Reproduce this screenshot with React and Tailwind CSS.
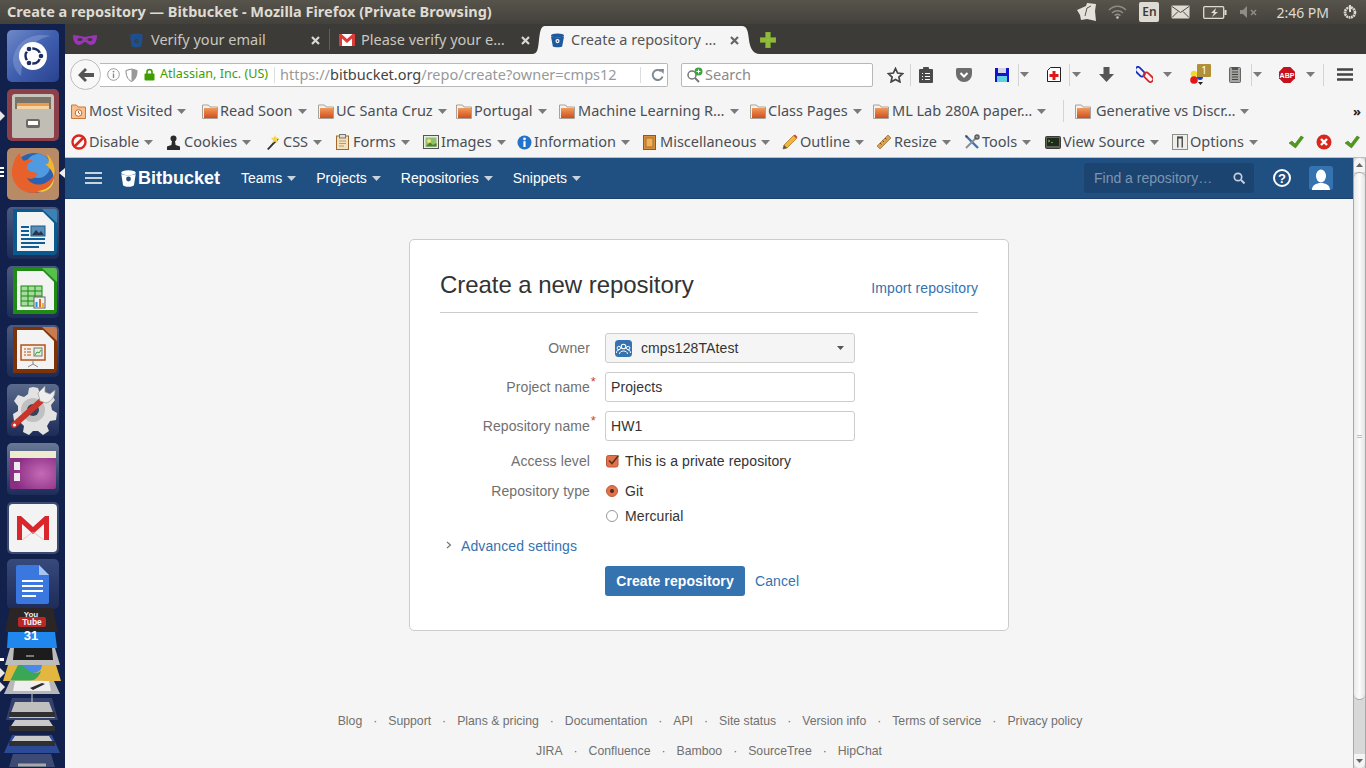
import React from "react";

const Caret = ({ c = "#7a7a7a", w = 9, h = 5 }) => (
  <svg width={w} height={h} viewBox="0 0 9 5" className="shrink-0"><path d="M0 0h9L4.5 5z" fill={c} /></svg>
);
const Close = ({ c = "#d8d8d4" }) => (
  <svg width="9" height="9" viewBox="0 0 9 9" className="shrink-0"><path d="M1 1l7 7M8 1L1 8" stroke={c} strokeWidth="2.2" /></svg>
);
const BucketIcon = ({ c = "#205081", hole = "#fff", s = 16 }) => (
  <svg width={s} height={s} viewBox="0 0 16 16" className="shrink-0">
    <ellipse cx="8" cy="2.6" rx="7" ry="2.2" fill={c} />
    <path d="M1 3.4c2 1.6 12 1.6 14 0L13 14c-.3 1.6-9.7 1.6-10 0z" fill={c} />
    <circle cx="8" cy="8.6" r="2.2" fill={hole} />
    <circle cx="8" cy="8.6" r="1" fill={c} />
  </svg>
);
const GmailIcon = ({ w = 16, h = 12 }) => (
  <svg width={w} height={h} viewBox="0 0 16 12" className="shrink-0">
    <rect width="16" height="12" fill="#fff" />
    <path d="M0 0h2.5L8 5l5.5-5H16v12h-3V4.6L8 9 3 4.6V12H0z" fill="#dc3b37" />
  </svg>
);
const Folder = () => (
  <svg width="16" height="15" viewBox="0 0 16 15" className="shrink-0">
    <path d="M.5 1h6l1.5 2h7.5v11.500H.5z" fill="#f4f2ee" stroke="#a8a29a" />
    <rect x="2" y="4" width="13" height="10" fill="url(#fold)" />
    <defs><linearGradient id="fold" x1="0" y1="0" x2="0" y2="1"><stop offset="0" stopColor="#ef9a5b" /><stop offset="1" stopColor="#d2501d" /></linearGradient></defs>
  </svg>
);
const MostVisited = () => (
  <svg width="15" height="15" viewBox="0 0 15 15" className="shrink-0">
    <path d="M.5 1h5l1.500 2h7.500v11.500H.5z" fill="#f6c18e" stroke="#c9773a" />
    <circle cx="7.500" cy="9" r="3.300" fill="#fff" stroke="#c9622a" />
    <path d="M7.500 7v2l1.600 1" stroke="#c9622a" fill="none" />
  </svg>
);
const Ic = {
  disable: <svg width="16" height="16" viewBox="0 0 16 16"><circle cx="8" cy="8" r="6.500" fill="#fff" stroke="#d9281e" strokeWidth="2.400" /><path d="M3.500 12.500l9-9" stroke="#d9281e" strokeWidth="2.600" /></svg>,
  cookies: <svg width="15" height="15" viewBox="0 0 15 15"><circle cx="7.500" cy="3.500" r="3" fill="#2b2b2b" /><path d="M6 6h3l.6 4 4.400 1.500V15H1v-3.500L5.400 10z" fill="#2b2b2b" /></svg>,
  css: <svg width="16" height="16" viewBox="0 0 16 16"><path d="M2 15L12 4l1.500 1.500L3.500 16z" fill="#333" /><path d="M10 1l1 2.500L14 4l-2 2 .5 3L10 7.500 7.500 9 8 6 6 4l3-.5z" fill="#f2d649" /></svg>,
  forms: <svg width="15" height="16" viewBox="0 0 15 16"><rect x="1.500" y="2" width="12" height="13.500" fill="#f3e2bd" stroke="#9b6a2c" /><rect x="4.500" y=".5" width="6" height="3.500" fill="#ddd" stroke="#777" /><path d="M4 7h7M4 9.500h7M4 12h5" stroke="#bb9a66" /></svg>,
  images: <svg width="16" height="14" viewBox="0 0 16 14"><rect x=".5" y=".5" width="15" height="13" fill="#e8ece4" stroke="#555" /><rect x="2.500" y="2.500" width="11" height="9" fill="#8fc06a" /><circle cx="6" cy="6" r="2" fill="#f4e27a" /><path d="M2.500 11.500L7 7.500l3 2.500 3.500-2v3.500z" fill="#4f7f33" /></svg>,
  info: <svg width="15" height="15" viewBox="0 0 15 15"><circle cx="7.500" cy="7.500" r="7" fill="#2273c9" /><rect x="6.400" y="6.200" width="2.200" height="5.800" fill="#fff" /><circle cx="7.500" cy="3.900" r="1.300" fill="#fff" /></svg>,
  misc: <svg width="13" height="15" viewBox="0 0 13 15"><rect x=".5" y=".5" width="12" height="14" fill="#d98f3a" stroke="#8b5a1e" /><rect x="3" y="3" width="7" height="9" fill="#eeb25e" stroke="#a96e2a" /></svg>,
  outline: <svg width="16" height="16" viewBox="0 0 16 16"><path d="M1 15l1-4L11.500 1.500l3 3L5 14z" fill="#f1b53c" stroke="#a76f17" strokeWidth=".7" /><path d="M11.500 1.500l3 3 1-1.500-2.500-2.500z" fill="#d8443a" /><path d="M1 15l1-4 3 3z" fill="#555" /></svg>,
  resize: <svg width="16" height="16" viewBox="0 0 16 16"><path d="M1 12L12 1l3 3L4 15z" fill="#d9a058" stroke="#9a6a2b" strokeWidth=".7" /><path d="M4 9l1.500 1.500M6.500 6.500L8 8M9 4l1.500 1.500" stroke="#7b4f18" /></svg>,
  tools: <svg width="16" height="16" viewBox="0 0 16 16"><path d="M2 2l12 12" stroke="#3a76b8" strokeWidth="2.400" /><path d="M14 2L2 14" stroke="#8a8f96" strokeWidth="2" /><circle cx="13" cy="3" r="2" fill="none" stroke="#555" strokeWidth="1.400" /><path d="M1 1l3 1-2 2z" fill="#444" /></svg>,
  source: <svg width="16" height="13" viewBox="0 0 16 13"><rect x=".5" y=".5" width="15" height="12" rx="1" fill="#5e635a" stroke="#3a3a3a" /><rect x="2" y="2" width="12" height="8" fill="#1f2a1c" /><path d="M3 4l2 1-2 1M6 6.500h2" stroke="#7bd36a" strokeWidth=".7" fill="none" /></svg>,
  options: <svg width="16" height="16" viewBox="0 0 16 16"><rect x=".5" y=".5" width="15" height="15" fill="#eeeeea" stroke="#8e8e88" /><rect x="5" y="2.500" width="1.500" height="11" fill="#555" /><rect x="9.500" y="2.500" width="1.500" height="11" fill="#555" /><rect x="5.500" y="2.500" width="5" height="2" fill="#444" /></svg>,
};
const Check = () => (
  <svg width="16" height="14" viewBox="0 0 16 14"><path d="M1 8l3-2 3 3 6-8 2.500 1.500L7.500 13z" fill="#4f9a1c" stroke="#3a7a10" strokeWidth=".6" /></svg>
);
const Bm = ({ w, icon, label, tx }) => (
  <div className={`${w} flex items-center shrink-0`}>
    <span className={`${tx} flex items-center justify-start shrink-0`}>{icon}</span>
    <span className="whitespace-nowrap">{label}</span>
    <span className="ml-[5px]"><Caret /></span>
  </div>
);
const Sep = ({ cls = "" }) => <div className={`w-px h-[22px] bg-[#d4d4d4] shrink-0 ${cls}`} />;

const Tile = ({ bg, children }) => (
  <div className={`w-[52px] h-[52px] rounded-[5px] overflow-hidden shrink-0 ${bg}`}>
    <svg width="52" height="52" viewBox="0 0 52 52">{children}</svg>
  </div>
);

const DocSheet = ({ c, c2 }) => (
  <>
    <path d="M6 2h32l12 12v30a4 4 0 0 1-4 4H6z" fill={c} />
    <path d="M10 5h26l11 11v28H10z" fill="#f3f3f3" />
    <path d="M35 2l15 14V5a3 3 0 0 0-3-3z" fill={c2} />
  </>
);

function Launcher() {
  return (
    <aside className="relative w-[65px] shrink-0 bg-[#11214c] flex flex-col items-center pt-[6px] gap-[7px] h-[744px] overflow-hidden">
      <Tile bg="bg-gradient-to-br from-[#6f88c8] via-[#3f5fae] to-[#2a4290]">
        <path d="M6 30C8 12 24 2 44 6 30 8 16 18 14 46 9 42 6 36 6 30z" fill="#8fa5d8" opacity=".45" />
        <circle cx="26" cy="26" r="14" fill="#fff" />
        <circle cx="26" cy="26" r="7.500" fill="none" stroke="#1c2e63" strokeWidth="2.400" />
        <circle cx="34" cy="26" r="3.400" fill="#fff" />
        <circle cx="22" cy="19" r="3.400" fill="#fff" />
        <circle cx="22" cy="33" r="3.400" fill="#fff" />
        <circle cx="34" cy="26" r="2.300" fill="#1c2e63" />
        <circle cx="22" cy="19" r="2.300" fill="#1c2e63" />
        <circle cx="22" cy="33" r="2.300" fill="#1c2e63" />
      </Tile>
      <Tile bg="bg-[#8c4049]">
        <rect x="5" y="5" width="42" height="44" rx="3" fill="#c7c4bb" />
        <rect x="8" y="8" width="36" height="14" fill="#7a7468" />
        <rect x="10" y="14" width="32" height="6" fill="#ed9a4f" />
        <rect x="10" y="17" width="32" height="4" fill="#f5d3a2" />
        <rect x="5" y="20" width="42" height="29" rx="2" fill="#c0bdb4" />
        <rect x="19" y="30" width="14" height="9" rx="2" fill="#6d6a62" />
        <rect x="21" y="32" width="10" height="4" fill="#fff" />
      </Tile>
      <Tile bg="bg-[#b98a66]">
        <circle cx="27" cy="25" r="20" fill="#2a62b0" />
        <circle cx="31" cy="18" r="12" fill="#4f9ae0" />
        <path d="M5 22C6 14 9 8 13 5c0 4 2 6 4 8 3-2 7-2 9 0-3 1-6 3-6 6 0 5 6 5 10 6 0 5-6 7-10 5 3 6 12 9 20 4 5-3 8-8 9-13 0 13-10 24-23 24C13 45 4 34 5 22z" fill="#e8602a" />
        <path d="M40 6c6 6 9 14 7 24-1-7-5-11-9-14 4 1 5-2 2-10z" fill="#f6b32c" />
        <path d="M47 30c-2 8-9 13-17 13 9 3 17-4 17-13z" fill="#f8d23a" />
      </Tile>
      <Tile bg="bg-gradient-to-b from-[#4a5a80] to-[#1d2c58]">
        <DocSheet c="#0b5a8f" c2="#3c82b4" />
        <path d="M14 20h8M14 24h8M14 28h8M14 32h24M14 36h24M14 40h18" stroke="#0e5f95" strokeWidth="2" />
        <rect x="24" y="19" width="14" height="10" fill="#5c8db5" stroke="#0e5f95" />
        <path d="M25 28l4-5 3 3 2-2 3 4z" fill="#26384f" />
      </Tile>
      <Tile bg="bg-gradient-to-b from-[#4a5a80] to-[#1d2c58]">
        <DocSheet c="#1f8a14" c2="#56c04a" />
        <rect x="14" y="20" width="21" height="20" fill="#a7dca0" stroke="#168a0c" />
        <path d="M14 25h21M14 30h21M14 35h21M21 20v20M28 20v20" stroke="#168a0c" />
        <rect x="27" y="31" width="11" height="11" fill="#eee" stroke="#666" />
        <rect x="28.500" y="36" width="2" height="5" fill="#2a8fd8" />
        <rect x="32" y="33" width="2" height="8" fill="#e06a2a" />
        <rect x="35" y="37" width="2" height="4" fill="#eeb030" />
      </Tile>
      <Tile bg="bg-gradient-to-b from-[#4a5a80] to-[#1d2c58]">
        <DocSheet c="#7d3208" c2="#c87a50" />
        <rect x="14" y="20" width="24" height="15" fill="#f6eee6" stroke="#b3531d" strokeWidth="1.500" />
        <path d="M17 24h2M17 27h2M17 30h2M20 24h4M20 27h4M20 30h4" stroke="#b3531d" />
        <rect x="27" y="23" width="8" height="8" fill="#dff0d8" stroke="#777" />
        <path d="M28 30l2-3 2 1 2-3" stroke="#3d9a3a" fill="none" />
        <path d="M26 35v4M26 39l-5 3M26 39l5 3" stroke="#888" />
      </Tile>
      <Tile bg="bg-gradient-to-b from-[#5a6a8c] to-[#1d2c58]">
        <path d="M26 3l5 1 2 6 5 2 6-2 4 6-4 5 1 5 5 3-1 7-6 1-3 5 2 5-6 4-5-4h-5l-4 4-6-3 1-6-4-4-6-1-1-7 5-3v-5l-4-5 4-6 6 2 4-3 1-6z" fill="#e2e2e2" />
        <circle cx="26" cy="26" r="12" fill="#c0c0c0" />
        <circle cx="26" cy="26" r="6" fill="#35405c" />
        <path d="M7 41L34 17" stroke="#c8352b" strokeWidth="6" strokeLinecap="round" />
        <path d="M33 17l-2-8 7-7v6l5 2 5-4c0 8-5 12-9 13z" fill="#eeeeee" stroke="#999" strokeWidth=".7" />
        <circle cx="7.500" cy="41" r="1.500" fill="#fff" />
      </Tile>
      <Tile bg="bg-gradient-to-b from-[#6a7896] to-[#1d2c58]">
        <defs><radialGradient id="wsp" cx=".68" cy=".6" r=".6"><stop offset="0" stopColor="#c46bb6" /><stop offset="1" stopColor="#8a2e84" /></radialGradient></defs>
        <rect x="3" y="8" width="46" height="38" rx="2" fill="url(#wsp)" />
        <rect x="3" y="8" width="46" height="7" fill="#ecebcf" />
        <rect x="7" y="19" width="6" height="8" fill="#ececec" />
        <rect x="7" y="30" width="6" height="8" fill="#ececec" />
      </Tile>
      <Tile bg="bg-[#3a4a70]">
        <rect x="2" y="2" width="48" height="48" rx="4" fill="#f3f3f3" />
        <path d="M10 14h4l12 11 12-11h4v24h-5V22L26 32 15 22v16h-5z" fill="#d8262c" />
        <path d="M15 38l11-8 11 8" stroke="#e8b0b0" fill="none" strokeWidth=".7" />
      </Tile>
      <div className="w-[52px] h-[50px] -mt-[2px] rounded-[5px] bg-gradient-to-b from-[#37497c] to-[#1d2c58] flex items-center justify-center shrink-0">
        <svg width="33" height="39" viewBox="0 0 33 39">
          <path d="M2 0h21l10 10v27a2 2 0 0 1-2 2H2a2 2 0 0 1-2-2V2a2 2 0 0 1 2-2z" fill="#3a78e0" />
          <path d="M23 0l10 10H23z" fill="#a8c5f2" />
          <path d="M6 16h21M6 21h21M6 26h21M6 31h14" stroke="#fff" strokeWidth="2.200" />
        </svg>
      </div>
      <svg width="65" height="160" viewBox="0 0 65 160" className="shrink-0 -mt-[9px]">
        <path d="M10 1h43l5 24H5z" fill="#2b2526" />
        <text x="31" y="9.500" textAnchor="middle" fill="#eee" fontSize="8" fontWeight="700" fontFamily="Liberation Sans">You</text>
        <rect x="18" y="10" width="28" height="10" rx="2" fill="#bb2626" />
        <text x="32" y="18" textAnchor="middle" fill="#f4f4f4" fontSize="8.500" fontWeight="700" fontFamily="Liberation Sans">Tube</text>
        <path d="M8 25h47l2 16H7z" fill="#1f87ee" />
        <text x="31" y="33" textAnchor="middle" fill="#fff" fontSize="13" fontWeight="700" fontFamily="Liberation Sans">31</text>
        <path d="M10 41h45l5 17H5z" fill="#bcbcbc" />
        <path d="M14 41h38l1 12H13z" fill="#1c1c1c" />
        <path d="M26 49h8" stroke="#999" strokeWidth="1.500" />
        <path d="M8 58h48l5 16H3z" fill="#e3b640" />
        <path d="M10 74l8-16h12c-1 7 6 10 11 6-2 6-6 10-13 10z" fill="#3aa757" />
        <path d="M22 58h20l-1 4c-3 5-10 5-14 0z" fill="#4a8ae6" />
        <path d="M10 74h33" stroke="#d8cfa0" />
        <path d="M10 74h44l6 13H4z" fill="#b8b8ba" />
        <path d="M15 74h34l2 10H13z" fill="#efefef" />
        <path d="M30 81l12-5 3 1-12 6z" fill="#2b2b2b" />
        <path d="M12 91h40l6 22H6z" fill="#3c4a74" opacity=".8" />
        <path d="M32 87v16" stroke="#ccc" />
        <path d="M15 95h34l6 16H9z" fill="#bfbfbf" />
        <path d="M9 105h46v5H9z" fill="#303030" />
        <path d="M15 113h34l6 9H9z" fill="#c9c9c9" />
        <path d="M9 119h46v5H9z" fill="#303030" />
        <path d="M12 128h40l8 18H4z" fill="#2c4a96" />
        <path d="M15 129h34l6 9H9z" fill="#c9c9c9" />
        <path d="M9 134h46v5H9z" fill="#303030" />
        <path d="M13 147h38l4 13H9z" fill="#3c4a74" />
        <path d="M18 158h28" stroke="#a8a8a8" strokeWidth="3" />
      </svg>

      <svg width="6" height="10" viewBox="0 0 6 10" className="absolute left-0 top-[87px]"><path d="M0 0l5 5-5 5z" fill="#e8e8e8" /></svg>
      <div className="absolute left-0 top-[143px] flex flex-col gap-[2px]">
        <div className="w-[4px] h-[2px] bg-white" /><div className="w-[4px] h-[2px] bg-white" /><div className="w-[4px] h-[2px] bg-white" />
      </div>
      <svg width="6" height="10" viewBox="0 0 6 10" className="absolute left-[59px] top-[144px]"><path d="M6 0L0 5l6 5z" fill="#eee" /></svg>
      <div className="absolute left-0 top-[634px] w-[4px] h-[3px] bg-white" />
      <svg width="6" height="10" viewBox="0 0 6 10" className="absolute left-0 top-[644px]"><path d="M0 0l5 5-5 5z" fill="#e8e8e8" /></svg>
      <svg width="6" height="10" viewBox="0 0 6 10" className="absolute left-0 top-[658px]"><path d="M0 0l5 5-5 5z" fill="#e8e8e8" /></svg>
    </aside>
  );
}

function TitleBar() {
  return (
    <header className="h-[24px] bg-gradient-to-b from-[#57544c] to-[#43413b] flex items-center font-['Noto_Sans',sans-serif] shrink-0">
      <span className="ml-[7px] text-[#dfdbd2] text-[14.500px] font-bold whitespace-nowrap">Create a repository — Bitbucket - Mozilla Firefox (Private Browsing)</span>
      <div className="ml-auto flex items-center h-full">
        <svg width="22" height="20" viewBox="0 0 22 20" className="mr-[10px]"><path d="M1 8l9-4 1-3 9 1-1 7 1 10-9-2-6 1-1-5z" fill="#e4e1da" /><path d="M9 14l2-8 4-2" stroke="#57544c" fill="none" /></svg>
        <svg width="19" height="14" viewBox="0 0 19 14" className="mr-[12px]"><path d="M1 5c5-5 12-5 17 0M4 8c3-3 8-3 11 0M6.500 10.500c2-1.500 4-1.500 6 0" stroke="#8e8c85" strokeWidth="1.500" fill="none" /><circle cx="9.500" cy="12.500" r="1.300" fill="#c8c5be" /></svg>
        <div className="w-[20px] h-[20px] bg-[#dfdbd2] rounded-[2px] text-[#3c3b37] text-[12px] font-semibold flex items-center justify-center">En</div>
        <svg width="19" height="14" viewBox="0 0 19 14" className="ml-[12px]"><rect x=".5" y=".5" width="18" height="13" rx="1" fill="#dfdbd2" /><path d="M1 1.500l8.500 6 8.500-6M1 12.500l6-6M18 12.500l-6-6" stroke="#4a4842" fill="none" /></svg>
        <svg width="24" height="13" viewBox="0 0 24 13" className="ml-[13px]"><rect x=".7" y=".7" width="20" height="11.600" rx="1" fill="#57544c" stroke="#dfdbd2" strokeWidth="1.300" /><rect x="21.500" y="4" width="2" height="5" fill="#dfdbd2" /><path d="M13 2l-5 5h3l-2 4 6-5h-3z" fill="#dfdbd2" /></svg>
        <svg width="18" height="12" viewBox="0 0 18 12" className="ml-[13px]"><path d="M0 4h3l4-4v12L3 8H0z" fill="#8e8c85" /><path d="M11 4l5 5M16 4l-5 5" stroke="#8e8c85" strokeWidth="1.500" /></svg>
        <span className="ml-[18px] text-[#dfdbd2] text-[14px] whitespace-nowrap">2:46 PM</span>
        <svg width="16" height="16" viewBox="0 0 16 16" className="ml-[13px] mr-[8px]"><circle cx="8" cy="8.500" r="5" fill="none" stroke="#dfdbd2" strokeWidth="2.600" strokeDasharray="1.800 .6" /><path d="M8 1v7" stroke="#dfdbd2" strokeWidth="2" /></svg>
      </div>
    </header>
  );
}

function TabBar() {
  return (
    <div className="h-[30px] bg-[#3c3b37] flex items-end text-[14.500px] text-[#c9c7c0] shrink-0">
      <div className="h-[30px] w-[53px] flex items-center pl-[8px] pt-[2px] shrink-0">
        <svg width="24" height="12" viewBox="0 0 24 12"><path d="M0 1c4 0 7 1 12 2 5-1 8-2 12-2 0 6-2 10-6 10-3 0-4-3-6-3s-3 3-6 3C2 11 0 7 0 1z" fill="#9a35b8" /><ellipse cx="7" cy="5.500" rx="2.600" ry="1.500" fill="#3c3b37" /><ellipse cx="17" cy="5.500" rx="2.600" ry="1.500" fill="#3c3b37" /></svg>
      </div>
      <div className="h-[30px] w-[212px] flex items-center pl-[11px] pt-[2px] shrink-0 relative">
        <BucketIcon c="#1f4f8c" hole="#3c3b37" s={15} />
        <span className="ml-[7px] whitespace-nowrap">Verify your email</span>
        <span className="ml-auto mr-[10px]"><Close /></span>
        <div className="absolute right-0 top-[5px] w-px h-[21px] bg-[#5f5e59]" />
      </div>
      <div className="h-[30px] w-[202px] flex items-center pl-[9px] pt-[2px] shrink-0">
        <GmailIcon />
        <span className="ml-[6px] whitespace-nowrap">Please verify your e…</span>
        <span className="ml-auto mr-[2px]"><Close /></span>
      </div>
      <svg width="13" height="28" viewBox="0 0 13 28" className="shrink-0"><path d="M0 28c6 0 6-6 7-14C8 5 9 0 13 0v28z" fill="#f5f5f5" /></svg>
      <div className="h-[28px] w-[197px] bg-[#f5f5f5] flex items-center pl-[5px] text-[#555] shrink-0">
        <BucketIcon c="#205a9c" s={15} />
        <span className="ml-[6px] whitespace-nowrap">Create a repository …</span>
        <span className="ml-auto mr-[3px]"><Close c="#666" /></span>
      </div>
      <svg width="18" height="28" viewBox="0 0 18 28" className="shrink-0"><path d="M0 0c5 0 6 5 7 14 1 8 4 14 11 14H0z" fill="#f5f5f5" /></svg>
      <div className="h-[30px] flex items-center pt-[2px] shrink-0">
        <svg width="16" height="16" viewBox="0 0 16 16"><path d="M5.500 0h5v5.500H16v5h-5.500V16h-5v-5.500H0v-5h5.500z" fill="#8fba3c" stroke="#6f982a" strokeWidth=".5" /></svg>
      </div>
    </div>
  );
}

function NavBar() {
  return (
    <div className="h-[41px] bg-[#f5f5f5] flex items-center pl-[5px] shrink-0 font-['Noto_Sans',sans-serif]">
      <div className="relative z-10 w-[31px] h-[31px] rounded-full bg-[#f8f8f8] border border-[#bdbdbd] flex items-center justify-center shrink-0">
        <svg width="16" height="14" viewBox="0 0 16 14"><path d="M7 0l2 2-3 3h10v4H6l3 3-2 2-7-7z" fill="#555" /></svg>
      </div>
      <div className="-ml-[1px] w-[568px] h-[24px] bg-white border border-l-0 border-[#b8b8b8] rounded-r-[2px] flex items-center shrink-0 text-[14.500px]">
        <svg width="13" height="13" viewBox="0 0 13 13" className="ml-[7px] shrink-0"><circle cx="6.500" cy="6.500" r="5.800" fill="none" stroke="#999" /><path d="M6.500 5.500v4.500" stroke="#888" strokeWidth="1.400" /><circle cx="6.500" cy="3.600" r=".9" fill="#888" /></svg>
        <svg width="13" height="14" viewBox="0 0 13 14" className="ml-[5px] shrink-0"><path d="M6.500 1L12 2.500c0 5-1.500 9-5.500 11C2.500 11.500 1 7.500 1 2.500z" fill="#fff" stroke="#888" /><path d="M6.500 1L12 2.500c0 5-1.500 9-5.500 11z" fill="#999" /></svg>
        <svg width="11" height="13" viewBox="0 0 11 13" className="ml-[6px] shrink-0"><path d="M3 6V4a2.500 2.500 0 0 1 5 0v2" fill="none" stroke="#3f9e00" strokeWidth="1.600" /><rect x=".5" y="5.500" width="10" height="7" rx="1" fill="#3f9e00" /></svg>
        <span className="ml-[5px] w-[108px] text-[12.600px] text-[#3f9e00] whitespace-nowrap shrink-0">Atlassian, Inc. (US)</span>
        <div className="w-px h-[16px] bg-[#ddd] ml-[6px] shrink-0" />
        <div className="ml-[5px] w-[337px] whitespace-nowrap text-[#999] shrink-0">https://<span className="text-[#444]">bitbucket.org</span>/repo/create?owner=cmps12</div>
        <div className="w-px h-[16px] bg-[#ddd] ml-[23px] shrink-0" />
        <svg width="14" height="14" viewBox="0 0 14 14" className="ml-[10px] shrink-0"><path d="M11.500 8.500A5 5 0 1 1 10 3.200" fill="none" stroke="#7f8b96" strokeWidth="2" /><path d="M8 1l5 0-.5 5z" fill="#7f8b96" /></svg>
      </div>
      <div className="ml-[13px] w-[192px] h-[24px] bg-white border border-[#b8b8b8] rounded-[2px] flex items-center shrink-0">
        <svg width="18" height="16" viewBox="0 0 18 16" className="ml-[4px] shrink-0"><circle cx="6" cy="8" r="4" fill="none" stroke="#777" strokeWidth="1.500" /><path d="M9 11l4 4" stroke="#777" strokeWidth="2" /><circle cx="12.500" cy="4.500" r="4" fill="#3fa142" /><path d="M12.500 2.500v4M10.500 4.500h4" stroke="#fff" /></svg>
        <span className="ml-[1px] text-[14.500px] text-[#8a8a8a]">Search</span>
      </div>
      <div className="ml-[11px] w-[22px] flex justify-center shrink-0"><svg width="17" height="16" viewBox="0 0 17 16"><path d="M8.500 1.500l2.100 4.500 5 .6-3.700 3.400 1 4.900-4.400-2.500-4.400 2.500 1-4.900L1.400 6.600l5-.6z" fill="none" stroke="#444" strokeWidth="1.700" /></svg></div>
      <Sep cls="ml-[4px]" />
      <div className="w-[30px] flex justify-center shrink-0"><svg width="14" height="16" viewBox="0 0 14 16"><rect y="2" width="14" height="14" rx="1" fill="#4a4a4a" /><rect x="4" width="6" height="4" rx="1" fill="#4a4a4a" /><path d="M3 6.500h1M3 9.500h1M3 12.500h1M6 6.500h5M6 9.500h5M6 12.500h5" stroke="#fff" /></svg></div>
      <div className="ml-[8px] w-[30px] flex justify-center shrink-0"><svg width="16" height="14" viewBox="0 0 16 14"><path d="M1.500 0h13A1.500 1.500 0 0 1 16 1.500V6a8 8 0 0 1-16 0V1.500A1.500 1.500 0 0 1 1.500 0z" fill="#6d6d6d" /><path d="M4.500 5l3.500 3.500L11.500 5" fill="none" stroke="#fff" strokeWidth="2" /></svg></div>
      <div className="ml-[8px] w-[30px] flex justify-center shrink-0"><svg width="14" height="14" viewBox="0 0 14 14"><path d="M0 0h14v14H0z" fill="#1414c8" /><rect x="3" y="0" width="8" height="5" fill="#d5d5e8" /><rect x="2" y="8" width="10" height="6" fill="#5ed0e0" /></svg></div>
      <Sep cls="ml-[1px]" />
      <div className="w-[10px] flex justify-center shrink-0"><Caret /></div>
      <div className="ml-[10px] w-[30px] flex justify-center shrink-0"><svg width="14" height="15" viewBox="0 0 14 15"><path d="M.5 3.500l3-3h10v14H.5z" fill="#fff" stroke="#222" /><path d="M5.500 4h3v3h3v3h-3v3h-3v-3h-3V7h3z" fill="#e01818" /></svg></div>
      <Sep />
      <div className="w-[12px] flex justify-center shrink-0"><Caret /></div>
      <div className="ml-[9px] w-[30px] flex justify-center shrink-0"><svg width="15" height="15" viewBox="0 0 15 15"><path d="M4.500 0h6v7H15l-7.500 8L0 7h4.500z" fill="#555" /></svg></div>
      <div className="ml-[8px] w-[30px] flex justify-center shrink-0"><svg width="17" height="17" viewBox="0 0 17 17"><rect x="-1.500" y="3" width="11" height="5.500" rx="2.700" transform="rotate(45 4 5.700)" fill="none" stroke="#1a2fc8" strokeWidth="1.800" /><rect x="7" y="8.500" width="11" height="5.500" rx="2.700" transform="rotate(45 12.500 11.200)" fill="none" stroke="#d42a2a" strokeWidth="1.800" /></svg></div>
      <div className="ml-[3px] w-[10px] flex justify-center shrink-0"><Caret /></div>
      <div className="relative ml-[10px] w-[30px] h-[20px] shrink-0">
        <svg width="14" height="16" viewBox="0 0 14 16" className="absolute left-[8px] top-[4px]"><circle cx="4" cy="5" r="3.300" fill="#eede20" /><circle cx="4" cy="11" r="3.800" fill="#e01818" /><circle cx="10" cy="8" r="3" fill="#1a3fd0" /><path d="M8 13h5l-2.500 3z" fill="#222" /></svg>
        <div className="absolute left-[15px] -top-[1px] w-[14px] h-[13px] bg-[#b0913a] rounded-[1px] text-white text-[10px] leading-[13px] text-center">1</div>
      </div>
      <div className="ml-[8px] w-[30px] flex justify-center shrink-0"><svg width="12" height="16" viewBox="0 0 12 16"><rect x=".5" y=".5" width="11" height="15" rx="1" fill="#a5a5a0" stroke="#666" /><rect x="3" y="0" width="6" height="3" fill="#555" /><path d="M3 5h6M3 7.500h6M3 10h6M3 12.500h6" stroke="#444" /></svg></div>
      <Sep cls="ml-[1px]" />
      <div className="w-[10px] flex justify-center shrink-0"><Caret /></div>
      <div className="ml-[10px] w-[30px] flex justify-center shrink-0"><svg width="16" height="16" viewBox="0 0 16 16"><path d="M4.700 0h6.600L16 4.700v6.600L11.300 16H4.700L0 11.300V4.700z" fill="#c4111a" /><text x="8" y="10.700" textAnchor="middle" fill="#fff" fontSize="7" fontWeight="700" fontFamily="Liberation Sans">ABP</text></svg></div>
      <div className="ml-[3px] w-[10px] flex justify-center shrink-0"><Caret /></div>
      <Sep cls="ml-[8px]" />
      <div className="ml-[6px] w-[30px] flex justify-center shrink-0"><svg width="16" height="13" viewBox="0 0 16 13"><path d="M0 1.500h16M0 6.500h16M0 11.500h16" stroke="#444" strokeWidth="2.400" /></svg></div>
    </div>
  );
}

function BookmarkBar() {
  return (
    <div className="h-[32px] bg-[#f5f5f5] flex items-center pl-[6px] text-[14.500px] text-[#4a4f55] shrink-0 font-['Noto_Sans',sans-serif]">
      <Bm w="w-[131px]" tx="w-[18px]" icon={<MostVisited />} label="Most Visited" />
      <Bm w="w-[116px]" tx="w-[18px]" icon={<Folder />} label="Read Soon" />
      <Bm w="w-[138px]" tx="w-[18px]" icon={<Folder />} label="UC Santa Cruz" />
      <Bm w="w-[103px]" tx="w-[18px]" icon={<Folder />} label="Portugal" />
      <Bm w="w-[191px]" tx="w-[19px]" icon={<Folder />} label="Machine Learning R…" />
      <Bm w="w-[123px]" tx="w-[18px]" icon={<Folder />} label="Class Pages" />
      <Bm w="w-[190px]" tx="w-[19px]" icon={<Folder />} label="ML Lab 280A paper…" />
      <Sep />
      <div className="ml-[11px] flex items-center">
        <span className="w-[21px] flex shrink-0"><Folder /></span>
        <span className="whitespace-nowrap">Generative vs Discr…</span>
        <span className="ml-[5px]"><Caret /></span>
      </div>
      <span className="ml-auto mr-[5px] text-[#222] text-[13px] font-bold leading-none">»</span>
    </div>
  );
}

function AddonBar() {
  return (
    <div className="h-[31px] bg-[#f5f5f5] border-b border-[#bfbfbf] flex items-center pl-[6px] text-[14.500px] text-[#4a4f55] shrink-0 font-['Noto_Sans',sans-serif]">
      <Bm w="w-[95px]" tx="w-[18px]" icon={Ic.disable} label="Disable" />
      <Bm w="w-[99px]" tx="w-[18px]" icon={Ic.cookies} label="Cookies" />
      <Bm w="w-[70px]" tx="w-[18px]" icon={Ic.css} label="CSS" />
      <Bm w="w-[88px]" tx="w-[18px]" icon={Ic.forms} label="Forms" />
      <Bm w="w-[94px]" tx="w-[18px]" icon={Ic.images} label="Images" />
      <Bm w="w-[126px]" tx="w-[17px]" icon={Ic.info} label="Information" />
      <Bm w="w-[139px]" tx="w-[17px]" icon={Ic.misc} label="Miscellaneous" />
      <Bm w="w-[94px]" tx="w-[18px]" icon={Ic.outline} label="Outline" />
      <Bm w="w-[88px]" tx="w-[18px]" icon={Ic.resize} label="Resize" />
      <Bm w="w-[81px]" tx="w-[18px]" icon={Ic.tools} label="Tools" />
      <Bm w="w-[127px]" tx="w-[18px]" icon={Ic.source} label="View Source" />
      <Bm w="w-[116px]" tx="w-[18px]" icon={Ic.options} label="Options" />
      <Check />
      <svg width="16" height="16" viewBox="0 0 16 16" className="ml-[12px]"><circle cx="8" cy="8" r="7.500" fill="#d8281e" /><path d="M5 5l6 6M11 5l-6 6" stroke="#fff" strokeWidth="2.400" /></svg>
      <span className="ml-[12px]"><Check /></span>
    </div>
  );
}

function SiteNav() {
  const items = ["Teams", "Projects", "Repositories", "Snippets"];
  return (
    <div className="h-[41px] bg-[#205081] border-b border-[#1c4067] flex items-center text-[14px] text-white shrink-0">
      <svg width="17" height="12" viewBox="0 0 17 12" className="ml-[20px] shrink-0"><path d="M0 1h17M0 6h17M0 11h17" stroke="#fff" strokeWidth="1.700" /></svg>
      <div className="ml-[19px] w-[99px] flex items-center shrink-0">
        <svg width="15" height="17" viewBox="0 0 15 17" className="shrink-0"><ellipse cx="7.500" cy="2.700" rx="7.300" ry="2.500" fill="#fff" /><path d="M.3 4c2.500 1.700 12 1.700 14.400 0L13 15c-.3 2.400-10.700 2.400-11 0z" fill="#fff" /><circle cx="7.500" cy="9" r="2.400" fill="#205081" /></svg>
        <span className="ml-[2px] text-[18px] font-bold leading-none">Bitbucket</span>
      </div>
      <div className="ml-[21px] flex items-center gap-[20px]">
        {items.map((t) => (
          <div key={t} className="flex items-center gap-[5px]">
            <span>{t}</span>
            <Caret c="#c7d3e0" />
          </div>
        ))}
      </div>
      <div className="ml-auto flex items-center">
        <div className="w-[170px] h-[30px] rounded-[3px] bg-[#1c4470] flex items-center pl-[10px]">
          <span className="text-[#7d95b2]">Find a repository…</span>
          <svg width="12" height="12" viewBox="0 0 12 12" className="ml-auto mr-[9px]"><circle cx="5" cy="5" r="3.700" fill="none" stroke="#c5d0dc" strokeWidth="1.700" /><path d="M8 8l3.500 3.500" stroke="#c5d0dc" strokeWidth="2" /></svg>
        </div>
        <div className="ml-[19px] w-[18px] h-[18px] rounded-full border-2 border-white flex items-center justify-center text-[13px] font-bold leading-none">?</div>
        <div className="ml-[18px] mr-[20px] w-[24px] h-[24px] rounded-[3px] bg-[#3572b0] overflow-hidden flex items-end justify-center">
          <svg width="20" height="22" viewBox="0 0 20 22"><ellipse cx="10" cy="8" rx="5" ry="6.500" fill="#fff" /><path d="M1 22c0-5 4-6 7-7h4c3 1 7 2 7 7z" fill="#fff" /></svg>
        </div>
      </div>
    </div>
  );
}

const Label = ({ children, req }) => (
  <div className="w-[150px] flex justify-end text-[#707070] shrink-0 relative whitespace-nowrap">
    {children}
    {req && <span className="absolute -right-[6px] -top-[5px] text-[#d04437] text-[13px]">*</span>}
  </div>
);

function Card() {
  return (
    <div className="w-[600px] mx-auto bg-white border border-[#cccccc] rounded-[5px] px-[30px] pt-[30px] pb-[34px] text-[14px] tracking-[0.1px] text-[#333]">
      <div className="flex items-end justify-between h-[43px] pb-[12px] border-b border-[#cccccc]">
        <h1 className="text-[24px] tracking-[-0.05px] leading-[30px] text-[#333]">Create a new repository</h1>
        <a className="text-[#3572b0] leading-[20px] mb-[2px]">Import repository</a>
      </div>
      <div className="mt-[20px] flex items-center h-[30px]">
        <Label>Owner</Label>
        <div className="ml-[15px] w-[250px] h-[30px] bg-[#f5f5f5] border border-[#cccccc] rounded-[3px] flex items-center pl-[9px] pr-[10px]">
          <svg width="17" height="17" viewBox="0 0 17 17" className="shrink-0"><rect width="17" height="17" rx="3.500" fill="#3572b0" /><circle cx="8.500" cy="6.500" r="2.300" fill="none" stroke="#fff" strokeWidth="1.100" /><circle cx="3.800" cy="8" r="1.700" fill="none" stroke="#fff" /><circle cx="13.200" cy="8" r="1.700" fill="none" stroke="#fff" /><path d="M4.500 14c0-4 8-4 8 0M1.500 13c0-2 1-3 2.500-3M15.500 13c0-2-1-3-2.500-3" fill="none" stroke="#fff" /></svg>
          <span className="ml-[9px] flex-1">cmps128TAtest</span>
          <Caret c="#555" w={7} h={4} />
        </div>
      </div>
      <div className="mt-[9px] flex items-center h-[30px]">
        <Label req>Project name</Label>
        <div className="ml-[15px] w-[250px] h-[30px] bg-white border border-[#cccccc] rounded-[3px] flex items-center pl-[5px]">Projects</div>
      </div>
      <div className="mt-[9px] flex items-center h-[30px]">
        <Label req>Repository name</Label>
        <div className="ml-[15px] w-[250px] h-[30px] bg-white border border-[#cccccc] rounded-[3px] flex items-center pl-[5px]">HW1</div>
      </div>
      <div className="mt-[10px] flex items-center h-[20px]">
        <Label>Access level</Label>
        <div className="ml-[15px] flex items-center">
          <svg width="14" height="14" viewBox="0 0 14 14" className="ml-px shrink-0"><rect x=".5" y="1.500" width="11.500" height="11.500" rx="2" fill="#e2724a" stroke="#b85a36" /><path d="M3 6.500l3 3 6.500-8" fill="none" stroke="#5a3426" strokeWidth="1.700" /></svg>
          <span className="ml-[5px]">This is a private repository</span>
        </div>
      </div>
      <div className="mt-[10px] flex items-center h-[20px]">
        <Label>Repository type</Label>
        <div className="ml-[15px] flex items-center">
          <div className="ml-px w-[12px] h-[12px] rounded-full bg-[#e2724a] border border-[#c05c38] flex items-center justify-center shrink-0"><div className="w-[4px] h-[4px] rounded-full bg-[#4a2a1e]" /></div>
          <span className="ml-[7px]">Git</span>
        </div>
      </div>
      <div className="mt-[5px] flex items-center h-[20px]">
        <div className="w-[150px] shrink-0" />
        <div className="ml-[15px] flex items-center">
          <div className="ml-px w-[12px] h-[12px] rounded-full bg-white border border-[#999] shrink-0" />
          <span className="ml-[7px]">Mercurial</span>
        </div>
      </div>
      <div className="mt-[10px] flex items-center h-[20px] text-[#3572b0]">
        <svg width="6" height="8" viewBox="0 0 6 8" className="ml-[6px] shrink-0 -mt-[3px]"><path d="M1 1l3.500 3L1 7" fill="none" stroke="#707070" strokeWidth="1.100" /></svg>
        <span className="ml-[9px]">Advanced settings</span>
      </div>
      <div className="mt-[10px] flex items-center h-[30px]">
        <div className="w-[150px] shrink-0" />
        <div className="ml-[15px] w-[140px] h-[30px] rounded-[3px] bg-[#3572b0] text-white font-bold flex items-center justify-center">Create repository</div>
        <a className="ml-[10px] text-[#3572b0]">Cancel</a>
      </div>
    </div>
  );
}

const FootRow = ({ items, cls }) => (
  <div className={`flex justify-center items-center h-[20px] text-[12.250px] text-[#707070] ${cls}`}>
    {items.map((t, i) => (
      <React.Fragment key={t}>
        {i > 0 && <span className="w-[26px] text-center text-[#707070]">·</span>}
        <span className="whitespace-nowrap">{t}</span>
      </React.Fragment>
    ))}
  </div>
);

function Scrollbar() {
  return (
    <div className="w-[13px] shrink-0 flex flex-col bg-[#d8d8d8] border-x border-[#a8a8a8] h-full">
      <div className="h-[14px] bg-[#f4f4f4] rounded-t-[6px] flex items-center justify-center shrink-0">
        <svg width="7" height="4" viewBox="0 0 7 4"><path d="M0 4h7L3.500 0z" fill="#666" /></svg>
      </div>
      <div className="h-[528px] bg-gradient-to-r from-[#e9e9e9] via-[#fbfbfb] to-[#e4e4e4] border-y border-[#a8a8a8] rounded-[6px] flex items-center justify-center shrink-0">
        <div className="w-[5px] h-[3px] border-y border-[#c0c0c0]" />
      </div>
      <div className="flex-1" />
      <div className="h-[14px] bg-[#f4f4f4] rounded-b-[6px] flex items-center justify-center shrink-0">
        <svg width="7" height="4" viewBox="0 0 7 4"><path d="M0 0h7L3.500 4z" fill="#666" /></svg>
      </div>
    </div>
  );
}

export default function App() {
  return (
    <div className="w-[1366px] h-[768px] overflow-hidden flex flex-col bg-[#f5f5f5] font-['Liberation_Sans',Arial,sans-serif]">
      <TitleBar />
      <div className="flex flex-1 min-h-0">
        <Launcher />
        <div className="flex-1 flex flex-col min-w-0">
          <div className="font-['Noto_Sans',sans-serif]"><TabBar /></div>
          <NavBar />
          <BookmarkBar />
          <AddonBar />
          <div className="flex flex-1 min-h-0">
            <main className="flex-1 min-w-0 flex flex-col">
              <SiteNav />
              <div className="pt-[40px]">
                <Card />
                <FootRow cls="mt-[80px] pl-[2px]" items={["Blog", "Support", "Plans & pricing", "Documentation", "API", "Site status", "Version info", "Terms of service", "Privacy policy"]} />
                <FootRow cls="mt-[10px]" items={["JIRA", "Confluence", "Bamboo", "SourceTree", "HipChat"]} />
              </div>
            </main>
            <Scrollbar />
          </div>
        </div>
      </div>
    </div>
  );
}
